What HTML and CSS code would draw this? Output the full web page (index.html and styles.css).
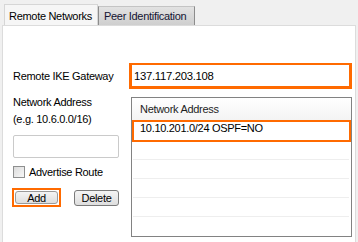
FILE: index.html
```html
<!DOCTYPE html>
<html lang="en">
<head>
    <meta charset="UTF-8">
    <title>Remote Networks</title>
    <link rel="stylesheet" href="styles.css">
</head>
<body>
    <div class="tabs">
        <div class="tab tab-active">Remote Networks</div>
        <div class="tab tab-idle">Peer Identification</div>
    </div>
    <div class="panel">
        <div class="gw-row">
            <label class="gw-label">Remote IKE Gateway</label>
            <div class="gw-box">137.117.203.108</div>
        </div>
        <div class="net-row">
            <div class="left-col">
                <div class="lbl">Network Address<br>(e.g. 10.6.0.0/16)</div>
                <input type="text" class="net-input">
                <label class="check-row">
                    <input type="checkbox" class="check">
                    <span>Advertise Route</span>
                </label>
                <div class="buttons">
                    <div class="hl-btn"><button class="btn btn-add">Add</button></div>
                    <button class="btn btn-del">Delete</button>
                </div>
            </div>
            <div class="list">
                <div class="list-head">Network Address</div>
                <div class="list-sel">10.10.201.0/24 OSPF=NO</div>
                <div class="list-row first"></div>
                <div class="list-row"></div>
                <div class="list-row"></div>
                <div class="list-row"></div>
            </div>
        </div>
    </div>
</body>
</html>
```

FILE: styles.css
```css
body {
    margin: 0;
    width: 358px;
    height: 242px;
    overflow: hidden;
    background-color: #f0f0f0;
    font-family: "Liberation Sans", Arial, sans-serif;
    font-size: 11px;
    letter-spacing: -0.3px;
    color: #000;
}

.tabs {
    display: flex;
    align-items: flex-end;
    height: 25px;
    padding-left: 4px;
    box-sizing: border-box;
}

.tab {
    box-sizing: border-box;
    line-height: 13px;
}

.tab-active {
    width: 94px;
    height: 21px;
    padding: 5px 0 0 4px;
    background-color: #f6f6f6;
    border: 1px solid #d6d6d6;
    border-bottom: none;
}

.tab-idle {
    width: 97px;
    height: 19px;
    padding: 3px 0 0 5px;
    color: #141432;
    background: linear-gradient(#e2e2e2, #cfcfcf);
    border: 1px solid #8c8c8c;
    border-top-color: #c4c4c4;
    border-bottom: none;
}

.panel {
    margin-left: 2px;
    width: 354px;
    height: 217px;
    box-sizing: border-box;
    background-color: #fff;
    border: 1px solid #dcdcdc;
    border-bottom: none;
    padding: 37px 0 0 10px;
}

.gw-row {
    display: flex;
    align-items: center;
}

.gw-label {
    width: 116px;
}

.gw-box {
    width: 223px;
    height: 26px;
    box-sizing: border-box;
    border: 3px solid #ff6a00;
    border-top-width: 2px;
    padding: 4px 0 0 2px;
    font-size: 11.3px;
    line-height: 14px;
}

.net-row {
    display: flex;
    align-items: flex-start;
    margin-top: 5px;
}

.left-col {
    width: 116px;
}

.lbl {
    line-height: 17px;
}

.net-input {
    display: block;
    margin: 7px 0 0;
    width: 106px;
    height: 23px;
    box-sizing: border-box;
    border: 1px solid #cacaca;
    border-radius: 2px;
    padding: 0;
}

.check-row {
    display: flex;
    align-items: center;
    margin-top: 8px;
    height: 12px;
}

.check {
    appearance: none;
    margin: 0 4px 0 0;
    width: 12px;
    height: 12px;
    border: 1px solid #8e8f8f;
    background: linear-gradient(135deg, #dcdcdc, #f7f7f7);
    box-sizing: border-box;
}

.buttons {
    display: flex;
    align-items: center;
    margin: 10px 0 0 -1px;
}

.hl-btn {
    border: 2px solid #ff6a00;
    padding: 1px;
}

.btn {
    display: block;
    margin: 0;
    padding: 0;
    font-family: inherit;
    font-size: 11px;
    letter-spacing: -0.3px;
    color: #000;
    line-height: 12px;
    background: linear-gradient(#f4f4f4, #dedede);
    border: 1px solid #7a7a7a;
    border-radius: 3px;
    box-sizing: border-box;
}

.btn-add {
    width: 43px;
    height: 13px;
    border-color: #9a9a9a;
}

.btn-del {
    margin-left: 13px;
    width: 45px;
    height: 16px;
}

.list {
    margin: 3px 0 0 2px;
    width: 221px;
    height: 140px;
    box-sizing: border-box;
    border: 1px solid #828282;
}

.list-head {
    height: 22px;
    box-sizing: border-box;
    padding: 5px 0 0 8px;
    line-height: 13px;
    color: #1e1e1e;
    background: linear-gradient(#ffffff, #f4f4f4);
}

.list-sel {
    height: 22px;
    box-sizing: border-box;
    border: 2px solid #ff6a00;
    padding: 0 0 0 6px;
    line-height: 13px;
}

.list-row {
    height: 18px;
    margin: 0 2px 0 1px;
    border-bottom: 1px solid #eeeeee;
}

.list-row.first {
    height: 17px;
}
```
